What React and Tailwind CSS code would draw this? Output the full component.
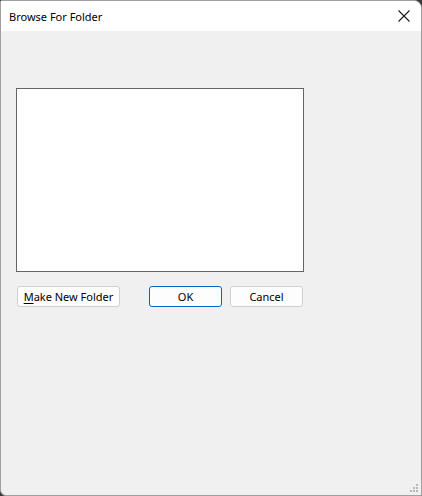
export default function App() {
  return (
    <div className="w-[422px] h-[496px] bg-[#3a3a3a]">
      <div
        className="relative flex flex-col w-[422px] h-[496px] bg-[#f0f0f0] border border-[#a0a0a0] rounded-tr-[8px] rounded-bl-[6px] rounded-tl-[2px] overflow-hidden"
        style={{ fontFamily: '"Noto Sans", "Open Sans", sans-serif' }}
      >
        {/* Title bar */}
        <div className="flex items-center justify-between h-[30px] bg-white pl-[8px] pr-[9px] shrink-0">
          <span className="text-[11px] text-black leading-none">Browse For Folder</span>
          <svg width="14" height="14" viewBox="0 0 14 14" className="mr-[1px]">
            <path d="M1.5 1.5 L12.5 12.5 M12.5 1.5 L1.5 12.5" stroke="#1a1a1a" strokeWidth="1.1" />
          </svg>
        </div>

        {/* Body */}
        <div className="flex flex-col pl-[15px] pt-[57px]">
          <div className="w-[288px] h-[184px] bg-white border border-[#646464]" />

          <div className="flex items-center mt-[14px] text-[11px] text-black">
            <button className="w-[103px] h-[21px] ml-[1px] bg-[#fdfdfd] border border-[#d0d0d0] rounded-[3px] leading-none">
              <span className="underline underline-offset-2">M</span>ake New Folder
            </button>
            <button className="w-[73px] h-[21px] ml-[29px] bg-[#fdfdfd] border border-[#0067c0] rounded-[3px] leading-none">
              OK
            </button>
            <button className="w-[73px] h-[21px] ml-[8px] bg-[#fdfdfd] border border-[#d0d0d0] rounded-[3px] leading-none">
              Cancel
            </button>
          </div>
        </div>

        {/* Resize grip */}
        <svg width="10" height="10" viewBox="0 0 10 10" className="absolute right-[2px] bottom-[2px]">
          <rect x="7" y="1" width="2" height="2" fill="#b8b8b8" />
          <rect x="4" y="4" width="2" height="2" fill="#b8b8b8" />
          <rect x="7" y="4" width="2" height="2" fill="#b8b8b8" />
          <rect x="1" y="7" width="2" height="2" fill="#b8b8b8" />
          <rect x="4" y="7" width="2" height="2" fill="#b8b8b8" />
          <rect x="7" y="7" width="2" height="2" fill="#b8b8b8" />
        </svg>
      </div>
    </div>
  );
}
